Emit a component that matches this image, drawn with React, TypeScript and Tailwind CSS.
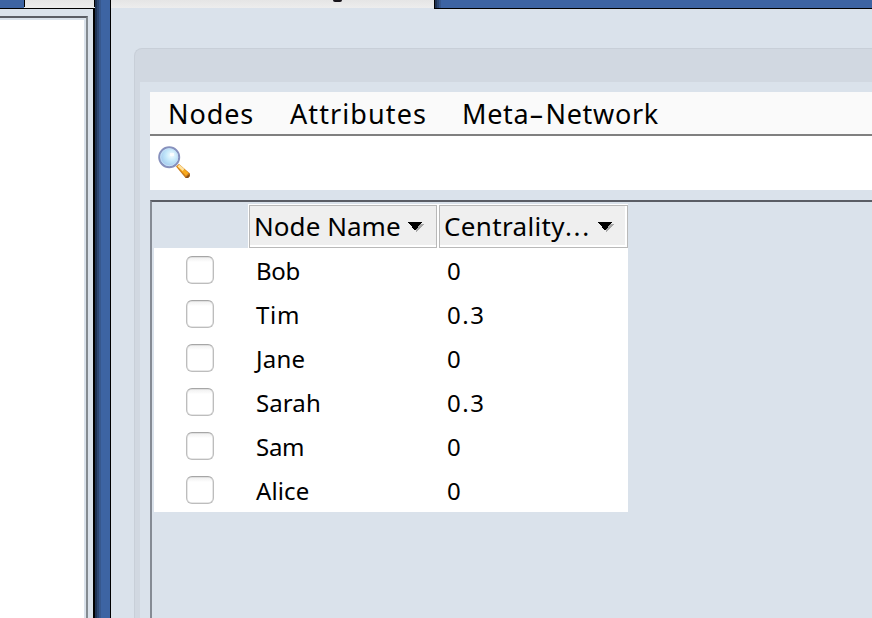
import React from "react";

const rows = [
  { name: "Bob", value: "0", nameClass: "tracking-[-0.3px]" },
  { name: "Tim", value: "0.3", nameClass: "tracking-[0.7px]" },
  { name: "Jane", value: "0", nameClass: "tracking-[0.2px]" },
  { name: "Sarah", value: "0.3", nameClass: "tracking-[0.1px]" },
  { name: "Sam", value: "0", nameClass: "tracking-[-0.3px]" },
  { name: "Alice", value: "0", nameClass: "tracking-[0.1px]" },
];

function SearchIcon() {
  return (
    <svg className="block h-8 w-8" viewBox="0 0 32 32">
      <defs>
        <radialGradient id="glass" cx="0.62" cy="0.4" r="0.65">
          <stop offset="0" stopColor="#f4fdff" />
          <stop offset="0.45" stopColor="#c4e8fa" />
          <stop offset="1" stopColor="#9cc4ec" />
        </radialGradient>
      </defs>
      <path d="M18 20.500l3-2.500 11 9.500v2.500l-2 2h-2.500z" fill="#c87a1c" />
      <path d="M19 20.500l2-2 9.500 8.500-2.500 3z" fill="#f9aa1c" />
      <path d="M20.500 19.500l5 4.500" stroke="#ffe2a0" strokeWidth="2.500" />
      <path d="M27.500 31.500l4-3.500v2.500l-1.500 1.500h-2.500z" fill="#87501c" />
      <circle cx="11.200" cy="11.200" r="10" fill="url(#glass)" stroke="#8791bd" strokeWidth="2" />
      <circle cx="11.200" cy="11.200" r="8.500" fill="none" stroke="#c6e0f7" strokeWidth="1" />
      <path d="M12 7h4v3h-4z" fill="#fff" opacity="0.8" />
    </svg>
  );
}

function SortArrow() {
  return (
    <svg className="mt-[2px] block h-[10px] w-4" viewBox="0 0 16 10" shapeRendering="crispEdges">
      <path d="M4 2h12l-6.500 7.500h-1z" fill="#a8a8a8" />
      <path d="M0 0h14l-6.500 8h-1z" fill="#000" />
    </svg>
  );
}

function LeftPane() {
  return (
    <div className="flex w-[95px] shrink-0 flex-col">
      <div className="flex h-2 shrink-0">
        <div className="h-full w-6 bg-[#3d64a3]" />
        <div className="h-[7px] w-px bg-black" />
        <div className="h-full w-[69px] bg-linear-to-b from-[#e5e5e5] to-[#ededed]" />
        <div className="h-[7px] w-px bg-black" />
      </div>
      <div className="flex min-h-0 flex-1 border-r-2 border-t border-black bg-[#dae2eb] pr-[5px] pt-[7px]">
        <div className="flex-1 border-r-2 border-t-2 border-r-[#848b91] border-t-[#5a5d65] bg-[#dae2eb] pr-[2px] pt-[2px]">
          <div className="h-full bg-white" />
        </div>
      </div>
    </div>
  );
}

function Splitter() {
  return (
    <div className="flex w-4 shrink-0 border-r border-black bg-[#3d64a3]">
      <div className="w-[2px] bg-[#1f3354]" />
      <div className="w-[2px] bg-[#2b4672]" />
      <div className="w-[2px] bg-[#37588e]" />
    </div>
  );
}

function TabStrip() {
  return (
    <div className="flex h-[9px] shrink-0">
      <div className="h-full w-[323px] overflow-hidden bg-[#dae2eb]">
        <div className="h-2 bg-linear-to-b from-[#e5e5e5] to-[#ededed]">
          <div className="ml-[222px] h-[1.500px] w-[9px] rounded-b-full bg-[#17141a]" />
        </div>
      </div>
      <div className="flex h-full flex-1 border-b border-black bg-[#3d64a3]">
        <div className="w-px bg-black" />
        <div className="w-[2px] bg-[#1f3354]" />
        <div className="w-[2px] bg-[#2b4672]" />
        <div className="w-[2px] bg-[#37588e]" />
      </div>
    </div>
  );
}

function NodeTable() {
  return (
    <div className="w-[474px]">
      <div className="flex h-11">
        <div className="w-[94px]" />
        <div className="h-full w-[190px] border-l border-t border-white bg-white">
          <div className="h-full w-[188px] border border-[#b9b9b9] bg-white pb-[2px]">
            <div className="flex h-full items-center bg-[#efefef] pl-1">
              <span className="w-[154px] whitespace-nowrap text-[26px] leading-[38px] tracking-[0.05px]">Node Name</span>
              <SortArrow />
            </div>
          </div>
        </div>
        <div className="h-full w-[190px] border-t border-white bg-white pl-px">
          <div className="h-full border border-[#b9b9b9] bg-white pb-[2px] pr-[2px]">
            <div className="flex h-full items-center bg-[#efefef] pl-1">
              <span className="w-[154px] whitespace-nowrap text-[26px] leading-[38px]">
                <span className="tracking-[0.35px]">Centrality</span>
                <span className="tracking-[1.7px]">...</span>
              </span>
              <SortArrow />
            </div>
          </div>
        </div>
      </div>
      <div className="bg-white">
        {rows.map((row) => (
          <div key={row.name} className="flex h-11 text-[24px] leading-[46px]">
            <div className="w-[102px] pl-8 pt-2">
              <div className="h-7 w-7 rounded-[6px] border-[1.500px] border-[#bdbdbd] border-t-[#a6a6a6] bg-linear-to-b from-[#efefef] to-white to-20% shadow-[inset_0_0_0_0.500px_#cfcfcf]" />
            </div>
            <div className={"w-[191px] " + row.nameClass}>{row.name}</div>
            <div className="tracking-[1.600px]">{row.value}</div>
          </div>
        ))}
      </div>
    </div>
  );
}

export default function App() {
  return (
    <div className="flex h-[618px] w-[872px] overflow-hidden bg-[#dae2eb] font-['Noto_Sans',sans-serif] text-black">
      <LeftPane />
      <Splitter />
      <div className="flex min-w-0 flex-1 flex-col">
        <TabStrip />
        <div className="min-h-0 flex-1 pl-[23px] pt-[39px]">
          <div className="h-full rounded-tl-[8px] border-l border-t border-[#c8cfd8] bg-[#d1d8e1] pl-[5px] pt-[33px]">
            <div className="flex h-full flex-col bg-[#dae2eb] pl-[10px] pt-[10px]">
              <div className="flex h-11 shrink-0 border-b-2 border-[#808080] bg-[#fafafa] pl-[18px] text-[27px] leading-[44px]">
                <span className="w-[122px] tracking-[0.9px]">Nodes</span>
                <span className="w-[172px] tracking-[1.100px]">Attributes</span>
                <span className="whitespace-nowrap tracking-[0.700px]">Meta<span className="inline-block w-[16px] origin-left scale-x-[1.7]">-</span>Network</span>
              </div>
              <div className="h-[54px] shrink-0 bg-white pl-2 pt-[10px]">
                <SearchIcon />
              </div>
              <div className="mt-[10px] min-h-0 flex-1 border-l-2 border-t-2 border-l-[#858b94] border-t-[#5a5d65] pl-[2px] pt-[2px]">
                <NodeTable />
              </div>
            </div>
          </div>
        </div>
      </div>
    </div>
  );
}
